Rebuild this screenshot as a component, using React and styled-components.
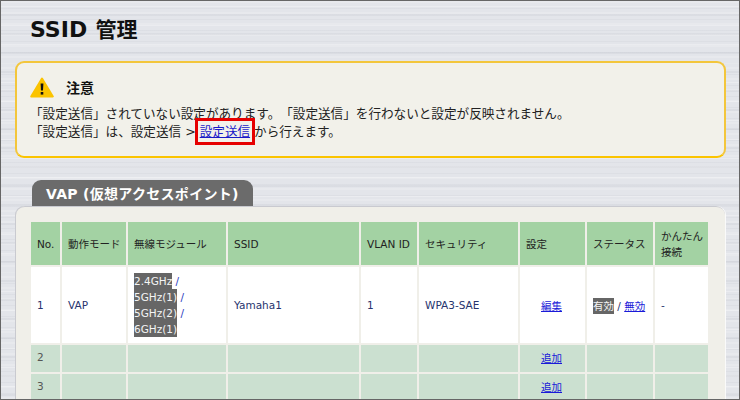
import React from "react";
import styled, { createGlobalStyle } from "styled-components";

const GlobalStyle = createGlobalStyle`
  html, body {
    margin: 0;
    padding: 0;
    background: #e3e5ea;
  }
  body {
    font-family: "DejaVu Sans", "Noto Sans CJK JP", sans-serif;
    font-size: 12.5px;
    color: #222;
    text-spacing-trim: space-all;
  }
`;

const columns = [29, 64, 98, 131, 56, 99, 65, 66, 53];

const Page = styled.div`
  box-sizing: border-box;
  width: 740px;
  height: 400px;
  overflow: hidden;
  border: 1px solid #666;
  padding: 0 14px 0 14px;
  background-color: #e3e5ea;
  background-image:
    repeating-linear-gradient(180deg, transparent 0 5px, rgba(255, 255, 255, 0.28) 5px 6px, transparent 6px 13px, rgba(120, 125, 140, 0.08) 13px 15px, transparent 15px 19px),
    repeating-linear-gradient(180deg, rgba(255, 255, 255, 0.16) 0 2px, transparent 2px 7px, rgba(120, 125, 140, 0.06) 7px 8px, transparent 8px 11px);
`;

const Title = styled.h1`
  margin: 0;
  padding: 14px 0 0 15px;
  height: 60px;
  box-sizing: border-box;
  font-size: 21px;
  line-height: 30px;
  font-weight: 700;
  color: #111;
`;

const TitleLatin = styled.span`
  font-size: 22px;
  margin-right: 1px;
`;

const Notice = styled.section`
  box-sizing: border-box;
  width: 711px;
  height: 97px;
  border: 2px solid #f3c63c;
  border-bottom-color: #fbc400;
  border-radius: 9px;
  background: #f2f1ea;
  padding: 12px 13px 0;
`;

const NoticeHead = styled.div`
  display: flex;
  align-items: center;
  gap: 12px;
  height: 24px;
  font-size: 14px;
  font-weight: 700;
  color: #111;
`;

const NoticeText = styled.p`
  margin: 6px 0 0;
  font-size: 12.6px;
  line-height: 18px;
  color: #222;
  white-space: nowrap;
`;

const MarkedLink = styled.a`
  display: inline-block;
  line-height: 17px;
  color: #1a1ac8;
  text-decoration: underline;
  outline: 3px solid #e60000;
  outline-offset: 2px;
`;

const Tab = styled.div`
  box-sizing: border-box;
  width: 221px;
  height: 26px;
  margin: 22px 0 0 17px;
  padding-left: 14px;
  border-radius: 9px 9px 0 0;
  background: #6b6b6b;
  color: #fff;
  font-size: 14px;
  font-weight: 700;
  line-height: 28px;
  letter-spacing: 0.3px;
  white-space: nowrap;
`;

const Panel = styled.section`
  box-sizing: border-box;
  width: 709px;
  height: 260px;
  margin-left: 1px;
  padding: 13px 13px 0;
  border-top: 1px solid #c9cad0;
  border-radius: 9px 9px 0 0;
  background: #f0efe9;
  box-shadow: 1px 0 0 #fafafa, -1px 0 0 #c9cad0;
`;

const Table = styled.table`
  table-layout: fixed;
  width: 681px;
  border-collapse: separate;
  border-spacing: 2px;
  font-size: 10.5px;
`;

const HeadCell = styled.th`
  height: 43px;
  padding: 0 0 0 6px;
  background: #a3d2a3;
  color: #222;
  font-weight: 400;
  line-height: 16px;
  text-align: left;
  white-space: nowrap;
`;

const Cell = styled.td`
  box-sizing: border-box;
  height: ${(p) => (p.$tall ? "76px" : "27px")};
  padding-top: 0;
  padding-bottom: ${(p) => (p.$tall ? "0" : "3px")};
  padding-left: ${(p) => (p.$center ? "0" : "6px")};
  padding-right: ${(p) => (p.$center ? "2px" : "0")};
  background: ${(p) => (p.$tall ? "#fff" : "#cbe0d0")};
  color: ${(p) => (p.$tall ? "#27346e" : "#555")};
  text-align: ${(p) => (p.$center ? "center" : "left")};
  white-space: nowrap;
`;

const ModuleLine = styled.div`
  height: 16px;
  line-height: 16px;
`;

const Active = styled.span`
  background: #666;
  color: #f4f4f4;
  padding: 2px 0;
`;

const Slash = styled.span`
  color: #2a3ac0;
`;

const Link = styled.a`
  color: #1a1ad8;
  text-decoration: underline;
`;

const WarningIcon = () => (
  <svg width="24" height="21" viewBox="0 0 24 21" aria-hidden="true">
    <path d="M12 1.5 L22.8 19.5 H1.2 Z" fill="#fbc400" stroke="#fbc400" strokeWidth="2" strokeLinejoin="round" />
    <path d="M10.6 6.5 H13.4 L13 13.5 H11 Z" fill="#111" />
    <rect x="10.7" y="15" width="2.6" height="2.6" fill="#111" />
  </svg>
);

const modules = ["2.4GHz", "5GHz(1)", "5GHz(2)", "6GHz(1)"];

export default function App() {
  return (
    <Page>
      <GlobalStyle />
      <Title>
        <TitleLatin>SSID</TitleLatin> 管理
      </Title>
      <Notice>
        <NoticeHead>
          <WarningIcon />
          注意
        </NoticeHead>
        <NoticeText>
          「設定送信」されていない設定があります。「設定送信」を行わないと設定が反映されません。
          <br />
          「設定送信」は、設定送信 &gt; <MarkedLink>設定送信</MarkedLink> から行えます。
        </NoticeText>
      </Notice>
      <Tab>VAP (仮想アクセスポイント)</Tab>
      <Panel>
        <Table>
          <colgroup>
            {columns.map((w, i) => (
              <col key={i} width={w} />
            ))}
          </colgroup>
          <thead>
            <tr>
              <HeadCell>No.</HeadCell>
              <HeadCell>動作モード</HeadCell>
              <HeadCell>無線モジュール</HeadCell>
              <HeadCell>SSID</HeadCell>
              <HeadCell>VLAN ID</HeadCell>
              <HeadCell>セキュリティ</HeadCell>
              <HeadCell>設定</HeadCell>
              <HeadCell>ステータス</HeadCell>
              <HeadCell>
                かんたん
                <br />
                接続
              </HeadCell>
            </tr>
          </thead>
          <tbody>
            <tr>
              <Cell $tall>1</Cell>
              <Cell $tall>VAP</Cell>
              <Cell $tall>
                {modules.map((m, i) => (
                  <ModuleLine key={m}>
                    <Active>{m}</Active>
                    {i < modules.length - 1 ? <Slash> /</Slash> : null}
                  </ModuleLine>
                ))}
              </Cell>
              <Cell $tall>Yamaha1</Cell>
              <Cell $tall>1</Cell>
              <Cell $tall>WPA3-SAE</Cell>
              <Cell $tall $center>
                <Link>編集</Link>
              </Cell>
              <Cell $tall>
                <Active>有効</Active> / <Link>無効</Link>
              </Cell>
              <Cell $tall>-</Cell>
            </tr>
            {[2, 3].map((n) => (
              <tr key={n}>
                <Cell>{n}</Cell>
                <Cell />
                <Cell />
                <Cell />
                <Cell />
                <Cell />
                <Cell $center>
                  <Link>追加</Link>
                </Cell>
                <Cell />
                <Cell />
              </tr>
            ))}
          </tbody>
        </Table>
      </Panel>
    </Page>
  );
}
